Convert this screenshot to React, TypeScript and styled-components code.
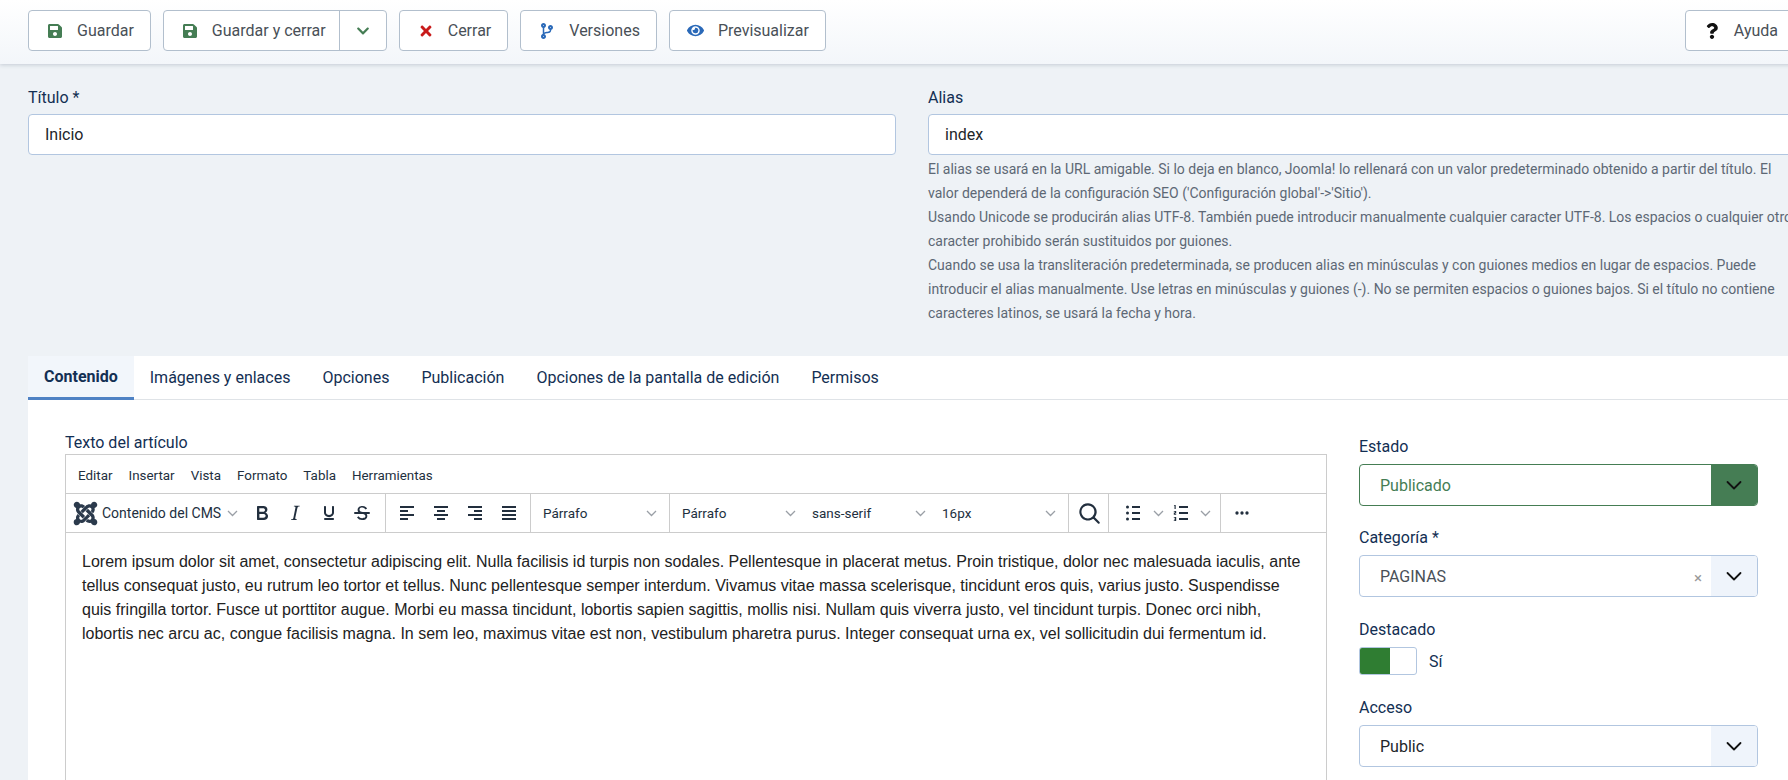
import React from "react";
import styled, { createGlobalStyle } from "styled-components";
import { FaSave, FaTimes, FaCodeBranch, FaEye, FaQuestion, FaJoomla, FaChevronDown } from "react-icons/fa";

const Global = createGlobalStyle`
  html, body { margin: 0; padding: 0; height: 780px; overflow: hidden; background: #eef2f6; }
  body { font-family: Roboto, "Liberation Sans", sans-serif; color: #22262a; }
  * { box-sizing: border-box; }
`;

const Page = styled.div`
  width: 1830px;
  height: 780px;
  overflow: hidden;
`;

const Toolbar = styled.header`
  height: 64px;
  padding: 10px 28px;
  display: flex;
  align-items: flex-start;
  gap: 12px;
  background: linear-gradient(180deg, #ffffff 0%, #f3f6fa 100%);
  box-shadow: 0 1px 4px rgba(30, 50, 80, 0.2);
`;

const Button = styled.button<{ $end?: boolean }>`
  height: 41px;
  padding: 0 16px;
  display: inline-flex;
  align-items: center;
  gap: 12px;
  background: #fff;
  border: 1px solid #b2bfcd;
  border-radius: 4px;
  font: 400 16px Roboto, sans-serif;
  color: #495057;
  white-space: nowrap;
  margin-left: ${(p) => (p.$end ? "auto" : 0)};
  margin-right: ${(p) => (p.$end ? "7px" : 0)};
`;

const SplitGroup = styled.div`
  display: flex;
  height: 41px;
  background: #fff;
  border: 1px solid #b2bfcd;
  border-radius: 4px;
`;

const SplitMain = styled(Button)`
  height: 39px;
  border: 0;
  border-right: 1px solid #b2bfcd;
  border-radius: 0;
  background: transparent;
  padding-right: 13px;
`;

const SplitToggle = styled(Button)`
  height: 39px;
  border: 0;
  background: transparent;
  padding: 0 13px;
`;

const IconSlot = styled.span<{ $color: string; $size?: number }>`
  display: inline-flex;
  justify-content: center;
  width: 20px;
  color: ${(p) => p.$color};
  font-size: ${(p) => p.$size ?? 16}px;
`;

const FieldsRow = styled.section`
  display: grid;
  grid-template-columns: 868px 1fr;
  column-gap: 32px;
  padding: 23px 28px 0;
  height: 292px;
`;

const Field = styled.div`
  display: flex;
  flex-direction: column;
`;

const Label = styled.label`
  font-size: 16px;
  line-height: 22px;
  color: #132f53;
  height: 27px;
`;

const TextInput = styled.div`
  height: 41px;
  padding: 0 16px;
  display: flex;
  align-items: center;
  background: #fff;
  border: 1px solid #b2c6e0;
  border-radius: 4px;
  font-size: 16px;
  color: #22262a;
`;

const Help = styled.div`
  padding-top: 2px;
  font-size: 14px;
  line-height: 24px;
  white-space: nowrap;
  color: #5d6875;
`;

const TabPanel = styled.section`
  margin-left: 28px;
  background: #fff;
  height: 424px;
`;

const TabBar = styled.nav`
  display: flex;
  height: 44px;
  border-bottom: 1px solid #dfe3e7;
`;

const Tab = styled.div<{ $active?: boolean }>`
  display: flex;
  align-items: center;
  height: 44px;
  padding: ${(p) => (p.$active ? "1px" : "0")} 16px 2px;
  font-size: 16px;
  font-weight: ${(p) => (p.$active ? 700 : 400)};
  color: #132f53;
  background: ${(p) => (p.$active ? "#f2f6fb" : "transparent")};
  border-bottom: ${(p) => (p.$active ? "3px solid #4f82c4" : "0")};
`;

const TabBody = styled.div`
  display: grid;
  grid-template-columns: 1262px 399px;
  column-gap: 32px;
  padding: 30px 37px 0;
`;

const EditorColumn = styled.div`
  display: flex;
  flex-direction: column;
`;

const EditorLabel = styled.div`
  font-size: 16px;
  line-height: 25px;
  height: 24px;
  color: #132f53;
`;

const Editor = styled.div`
  border: 1px solid #ccc;
  border-bottom: 0;
  height: 400px;
  background: #fff;
`;

const MenuBar = styled.div`
  height: 39px;
  padding: 2px 12px 0;
  display: flex;
  align-items: center;
  gap: 16px;
  font-size: 13.4px;
  color: #222f3e;
  border-bottom: 1px solid #ccc;
`;

const EditorTools = styled.div`
  height: 39px;
  display: flex;
  align-items: stretch;
  border-bottom: 1px solid #ccc;
`;

const ToolGroup = styled.div<{ $width?: number; $border?: boolean; $pad?: number }>`
  display: flex;
  align-items: center;
  width: ${(p) => (p.$width ? `${p.$width}px` : "auto")};
  border-right: ${(p) => (p.$border === false ? "0" : "1px solid #ccc")};
  padding: 0 ${(p) => p.$pad ?? 4}px;
  flex-shrink: 0;
`;

const ToolIcon = styled.span<{ $w?: number }>`
  width: ${(p) => p.$w ?? 34}px;
  display: inline-flex;
  justify-content: center;
  align-items: center;
  color: #222f3e;
`;

const ChevSlot = styled.span<{ $w: number }>`
  width: ${(p) => p.$w}px;
  display: inline-flex;
  justify-content: center;
  align-items: center;
`;

const ToolSelect = styled.div<{ $w: number }>`
  width: ${(p) => p.$w}px;
  display: flex;
  align-items: center;
  justify-content: space-between;
  font-size: 13.5px;
  color: #222f3e;
  padding: 0 8px;
`;

const CmsButton = styled.div`
  display: flex;
  align-items: center;
  gap: 3px;
  font-size: 14px;
  color: #222f3e;
  margin-right: 7px;
  white-space: nowrap;
`;

const CmsCaret = styled.span`
  display: inline-flex;
  margin-left: 3px;
`;

const Content = styled.div`
  padding: 17px 16px 16px;
  font-family: "Liberation Sans", Arial, sans-serif;
  font-size: 16px;
  line-height: 24px;
  color: #222;
  white-space: nowrap;
`;

const Side = styled.aside`
  display: flex;
  flex-direction: column;
  padding-top: 5px;
`;

const SideField = styled.div<{ $top?: number; $bottom?: number }>`
  display: flex;
  flex-direction: column;
  margin-top: ${(p) => p.$top ?? 0}px;
  margin-bottom: ${(p) => p.$bottom ?? 20}px;
`;

const SideLabel = styled.div`
  font-size: 16px;
  line-height: 24px;
  height: 29px;
  color: #132f53;
`;

const Select = styled.div<{ $state?: "ok" }>`
  height: 42px;
  display: flex;
  align-items: center;
  border: 1px solid ${(p) => (p.$state ? "#457d54" : "#b2c6e0")};
  border-radius: 4px;
  overflow: hidden;
  background: #fff;
`;

const SelectValue = styled.div<{ $color: string }>`
  flex: 1;
  padding-left: 20px;
  font-size: 16px;
  color: ${(p) => p.$color};
`;

const SelectClear = styled.span`
  color: #999;
  font-size: 15px;
  margin: 4px 9px 0 0;
  line-height: 1;
`;

const SelectArrow = styled.div<{ $state?: "ok" }>`
  width: 46px;
  height: 100%;
  display: flex;
  align-items: center;
  justify-content: center;
  background: ${(p) => (p.$state ? "#457d54" : "#eff4fb")};
`;

const ToggleRow = styled.div`
  display: flex;
  align-items: center;
  gap: 12px;
  font-size: 16px;
  color: #132f53;
`;

const Toggle = styled.div`
  width: 58px;
  height: 28px;
  border: 1px solid #b2c6e0;
  border-radius: 3px;
  background: #fff;
  overflow: hidden;
`;

const ToggleFill = styled.div`
  width: 54%;
  height: 100%;
  background: #2f7d32;
`;

const Chevron = () => (
  <svg width="16" height="16" viewBox="0 0 16 16" fill="none" stroke="#111" strokeWidth="1.8" strokeLinecap="round" strokeLinejoin="round">
    <path d="M1.5 5l6.5 6.5L14.500 5" />
  </svg>
);

const SmallChevron = () => (
  <svg width="11" height="11" viewBox="0 0 11 11" fill="none" stroke="#9a9fa6" strokeWidth="1.3">
    <path d="M1 3l4.500 4.500L10 3" />
  </svg>
);

const Mce = ({ d, size = 24 }: { d: string; size?: number }) => (
  <svg width={size} height={size} viewBox="0 0 24 24" fill="#222f3e">
    <path d={d} />
  </svg>
);

const BOLD = "M7.8 19c-.3 0-.5 0-.6-.2l-.2-.5V5.7c0-.2 0-.4.2-.5l.6-.2h5c1.5 0 2.7.3 3.5 1 .7.6 1.1 1.4 1.1 2.5a3 3 0 0 1-.6 1.9c-.4.6-1 1-1.6 1.2.4.1.9.3 1.3.6s.8.7 1 1.2c.4.4.5 1 .5 1.6 0 1.3-.4 2.3-1.3 3-.8.7-2.1 1-3.8 1H7.8zm5-8.3c.6 0 1.2-.1 1.6-.5.4-.3.6-.7.6-1.3 0-1.1-.8-1.7-2.4-1.7H9.3v3.5h3.5zm.5 6c.7 0 1.3-.1 1.7-.4.4-.4.6-.9.6-1.5s-.2-1-.7-1.4c-.4-.3-1-.4-2-.4H9.4v3.8h4z";
const ITALIC = "M16.7 4.7l-.1.9h-.3c-.6 0-1 0-1.4.3-.3.3-.4.6-.5 1.1l-2.1 9.8v.6c0 .5.4.8 1.4.8h.2l-.2.8H8l.2-.8h.2c1.1 0 1.8-.5 2-1.5l2-9.8.1-.5c0-.6-.4-.8-1.4-.8h-.3l.2-.9h5.8z";
const UNDERLINE = "M16 5c.6 0 1 .4 1 1v5.5a4 4 0 0 1-.4 1.8l-1 1.4a5.3 5.3 0 0 1-5.5 1 5 5 0 0 1-1.6-1c-.5-.4-.8-.9-1.1-1.4a4 4 0 0 1-.4-1.8V6c0-.6.4-1 1-1s1 .4 1 1v5.5c0 .3 0 .6.2 1l.6.7a3.3 3.3 0 0 0 2.2.8 3.4 3.4 0 0 0 2.2-.8c.3-.2.4-.5.6-.8l.2-.9V6c0-.6.4-1 1-1zM8 17h8c.6 0 1 .4 1 1s-.4 1-1 1H8a1 1 0 0 1 0-2z";
const STRIKE = "M15.6 8.5c-.5-.7-1-1.1-1.3-1.3-.6-.4-1.3-.6-2-.6-2.7 0-2.8 1.7-2.8 2.1 0 1.6 1.8 2 3.2 2.3 4.4.9 4.6 2.8 4.6 3.9 0 1.4-.7 4.1-5 4.1A6.2 6.2 0 0 1 7 16.4l1.5-1.1c.4.6 1.6 2 3.7 2 1.6 0 2.5-.4 3-1.2.4-.8.3-2-.8-2.6-.7-.4-1.6-.7-2.9-1-1-.2-3.9-.8-3.9-3.6C7.6 6 10.3 5 12.4 5c2.9 0 4.2 1.6 4.7 2.4l-1.5 1.1zM5 11h14a1 1 0 0 1 0 2H5a1 1 0 0 1 0-2z";
const ALIGN_L = "M5 5h14v2H5zM5 9h8v2H5zM5 13h14v2H5zM5 17h8v2H5z";
const ALIGN_C = "M5 5h14v2H5zM8 9h8v2H8zM5 13h14v2H5zM8 17h8v2H8z";
const ALIGN_R = "M5 5h14v2H5zM11 9h8v2h-8zM5 13h14v2H5zM11 17h8v2h-8z";
const ALIGN_J = "M5 5h14v2H5zM5 9h14v2H5zM5 13h14v2H5zM5 17h14v2H5z";
const SEARCH = "M16 17.3a8 8 0 1 1 1.4-1.4l4.3 4.4a1 1 0 0 1-1.4 1.4l-4.4-4.3zm-5-.3a6 6 0 1 0 0-12 6 6 0 0 0 0 12z";
const BULLETS = "M11 5h8v2h-8zM11 11h8v2h-8zM11 17h8v2h-8zM6.500 4.500a1.500 1.500 0 1 1 0 3 1.500 1.500 0 0 1 0-3zM6.500 10.500a1.500 1.500 0 1 1 0 3 1.500 1.500 0 0 1 0-3zM6.500 16.500a1.500 1.500 0 1 1 0 3 1.500 1.500 0 0 1 0-3z";
const NUMBERS = "M10 5h9v2h-9zM10 11h9v2h-9zM10 17h9v2h-9zM5.500 4h1.200v4H5.500V5H4.800zM4.800 10h2.400v2.400H6v.6h1.200v.8H4.800v-2.200H6V10.800H4.800zM4.800 16h2.400v4H4.800v-.8H6v-.8H5v-.6h1v-1H4.800z";
const MORE = "M6 10a2 2 0 1 1 0 4 2 2 0 0 1 0-4zM12 10a2 2 0 1 1 0 4 2 2 0 0 1 0-4zM18 10a2 2 0 1 1 0 4 2 2 0 0 1 0-4z";

export default function App() {
  return (
    <Page>
      <Global />
      <Toolbar>
        <Button><IconSlot $color="#457d54"><FaSave /></IconSlot>Guardar</Button>
        <SplitGroup>
          <SplitMain><IconSlot $color="#457d54"><FaSave /></IconSlot>Guardar y cerrar</SplitMain>
          <SplitToggle><IconSlot $color="#457d54" $size={14}><FaChevronDown /></IconSlot></SplitToggle>
        </SplitGroup>
        <Button><IconSlot $color="#c81a1a"><FaTimes /></IconSlot>Cerrar</Button>
        <Button><IconSlot $color="#2a69b8"><FaCodeBranch /></IconSlot>Versiones</Button>
        <Button><IconSlot $color="#2a69b8" $size={17}><FaEye /></IconSlot>Previsualizar</Button>
        <Button $end><IconSlot $color="#111"><FaQuestion /></IconSlot>Ayuda</Button>
      </Toolbar>

      <FieldsRow>
        <Field>
          <Label>Título *</Label>
          <TextInput>Inicio</TextInput>
        </Field>
        <Field>
          <Label>Alias</Label>
          <TextInput>index</TextInput>
          <Help>
            El alias se usará en la URL amigable. Si lo deja en blanco, Joomla! lo rellenará con un valor predeterminado obtenido a partir del título. El<br />
            valor dependerá de la configuración SEO ('Configuración global'-&gt;'Sitio').<br />
            Usando Unicode se producirán alias UTF-8. También puede introducir manualmente cualquier caracter UTF-8. Los espacios o cualquier otro<br />
            caracter prohibido serán sustituidos por guiones.<br />
            Cuando se usa la transliteración predeterminada, se producen alias en minúsculas y con guiones medios en lugar de espacios. Puede<br />
            introducir el alias manualmente. Use letras en minúsculas y guiones (-). No se permiten espacios o guiones bajos. Si el título no contiene<br />
            caracteres latinos, se usará la fecha y hora.
          </Help>
        </Field>
      </FieldsRow>

      <TabPanel>
        <TabBar>
          <Tab $active>Contenido</Tab>
          <Tab>Imágenes y enlaces</Tab>
          <Tab>Opciones</Tab>
          <Tab>Publicación</Tab>
          <Tab>Opciones de la pantalla de edición</Tab>
          <Tab>Permisos</Tab>
        </TabBar>
        <TabBody>
          <EditorColumn>
            <EditorLabel>Texto del artículo</EditorLabel>
            <Editor>
              <MenuBar>
                <span>Editar</span><span>Insertar</span><span>Vista</span><span>Formato</span><span>Tabla</span><span>Herramientas</span>
              </MenuBar>
              <EditorTools>
                <ToolGroup $width={320} $pad={6}>
                  <CmsButton>
                    <FaJoomla size={27} color="#2b3a4c" />
                    Contenido del CMS
                    <CmsCaret><SmallChevron /></CmsCaret>
                  </CmsButton>
                  <ToolIcon><Mce d={BOLD} /></ToolIcon>
                  <ToolIcon><Mce d={ITALIC} /></ToolIcon>
                  <ToolIcon><Mce d={UNDERLINE} /></ToolIcon>
                  <ToolIcon><Mce d={STRIKE} /></ToolIcon>
                </ToolGroup>
                <ToolGroup $width={145}>
                  <ToolIcon><Mce d={ALIGN_L} /></ToolIcon>
                  <ToolIcon><Mce d={ALIGN_C} /></ToolIcon>
                  <ToolIcon><Mce d={ALIGN_R} /></ToolIcon>
                  <ToolIcon><Mce d={ALIGN_J} /></ToolIcon>
                </ToolGroup>
                <ToolGroup $width={139}>
                  <ToolSelect $w={130}>Párrafo<SmallChevron /></ToolSelect>
                </ToolGroup>
                <ToolGroup $width={399}>
                  <ToolSelect $w={130}>Párrafo<SmallChevron /></ToolSelect>
                  <ToolSelect $w={130}>sans-serif<SmallChevron /></ToolSelect>
                  <ToolSelect $w={130}>16px<SmallChevron /></ToolSelect>
                </ToolGroup>
                <ToolGroup $width={40}>
                  <ToolIcon $w={32}><Mce d={SEARCH} size={26} /></ToolIcon>
                </ToolGroup>
                <ToolGroup $width={112} $pad={6}>
                  <ToolIcon $w={38}><Mce d={BULLETS} /></ToolIcon>
                  <ChevSlot $w={14}><SmallChevron /></ChevSlot>
                  <ToolIcon $w={33}><Mce d={NUMBERS} /></ToolIcon>
                  <ChevSlot $w={18}><SmallChevron /></ChevSlot>
                </ToolGroup>
                <ToolGroup $border={false}>
                  <ToolIcon $w={33}><Mce d={MORE} size={20} /></ToolIcon>
                </ToolGroup>
              </EditorTools>
              <Content>
                Lorem ipsum dolor sit amet, consectetur adipiscing elit. Nulla facilisis id turpis non sodales. Pellentesque in placerat metus. Proin tristique, dolor nec malesuada iaculis, ante<br />
                tellus consequat justo, eu rutrum leo tortor et tellus. Nunc pellentesque semper interdum. Vivamus vitae massa scelerisque, tincidunt eros quis, varius justo. Suspendisse<br />
                quis fringilla tortor. Fusce ut porttitor augue. Morbi eu massa tincidunt, lobortis sapien sagittis, mollis nisi. Nullam quis viverra justo, vel tincidunt turpis. Donec orci nibh,<br />
                lobortis nec arcu ac, congue facilisis magna. In sem leo, maximus vitae est non, vestibulum pharetra purus. Integer consequat urna ex, vel sollicitudin dui fermentum id.
              </Content>
            </Editor>
          </EditorColumn>
          <Side>
            <SideField>
              <SideLabel>Estado</SideLabel>
              <Select $state="ok">
                <SelectValue $color="#457d54">Publicado</SelectValue>
                <SelectArrow $state="ok"><Chevron /></SelectArrow>
              </Select>
            </SideField>
            <SideField>
              <SideLabel>Categoría *</SideLabel>
              <Select>
                <SelectValue $color="#495057">PAGINAS</SelectValue>
                <SelectClear>×</SelectClear>
                <SelectArrow><Chevron /></SelectArrow>
              </Select>
            </SideField>
            <SideField $top={1} $bottom={21}>
              <SideLabel>Destacado</SideLabel>
              <ToggleRow>
                <Toggle><ToggleFill /></Toggle>
                Sí
              </ToggleRow>
            </SideField>
            <SideField>
              <SideLabel>Acceso</SideLabel>
              <Select>
                <SelectValue $color="#22262a">Public</SelectValue>
                <SelectArrow><Chevron /></SelectArrow>
              </Select>
            </SideField>
          </Side>
        </TabBody>
      </TabPanel>
    </Page>
  );
}
